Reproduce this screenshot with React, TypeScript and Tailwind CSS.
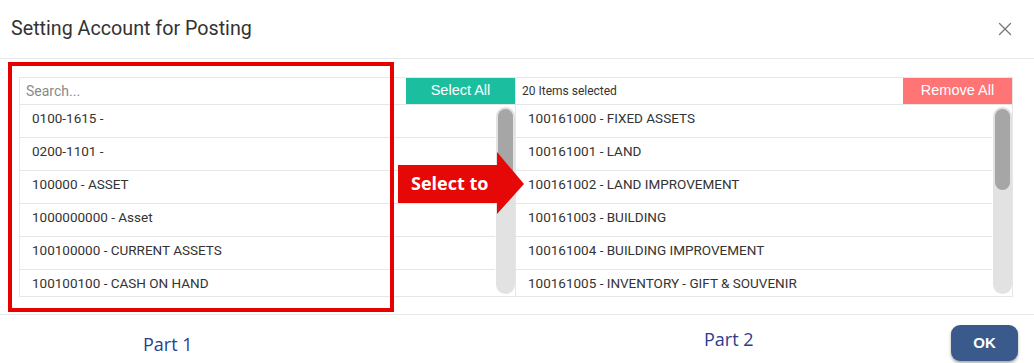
import React from 'react';
import { X } from 'lucide-react';

const leftItems = [
  '0100-1615 -',
  '0200-1101 -',
  '100000 - ASSET',
  '1000000000 - Asset',
  '100100000 - CURRENT ASSETS',
  '100100100 - CASH ON HAND',
];

const rightItems = [
  '100161000 - FIXED ASSETS',
  '100161001 - LAND',
  '100161002 - LAND IMPROVEMENT',
  '100161003 - BUILDING',
  '100161004 - BUILDING IMPROVEMENT',
  '100161005 - INVENTORY - GIFT & SOUVENIR',
];

const ItemList = ({ items }: { items: string[] }) => (
  <div className="flex h-[192px] overflow-hidden border-b border-[#e6e6e6]">
    <div className="flex-1 overflow-hidden">
      {items.map((it) => (
        <div
          key={it}
          className="h-[33px] shrink-0 border-b border-[#e6e6e6] pl-3 pt-[3px] text-[13.5px] leading-[20px] text-[#333] last:border-b-0"
        >
          {it}
        </div>
      ))}
    </div>
    <div className="w-[20px] shrink-0 py-[2px] pl-[1px]">
      <div className="h-full rounded-full bg-[#e2e2e2] p-[2px]">
        <div className="h-[81px] rounded-full bg-[#a6a6a6]" />
      </div>
    </div>
  </div>
);

const App = () => {
  return (
    <div className="relative w-[1034px] h-[363px] overflow-hidden bg-white font-['Roboto',sans-serif]">
      <div className="flex h-[59px] items-center justify-between border-b border-[#e9e9e9] pl-[11px] pr-[18px]">
        <h1 className="text-[19.7px] text-[#333]">Setting Account for Posting</h1>
        <X size={22} strokeWidth={1.4} className="text-[#777]" />
      </div>

      <div className="flex border-b border-[#e9e9e9] pl-[19px] pt-[18px] pb-[17px]">
        <div className="w-[496px] border-l border-t border-[#e6e6e6]">
          <div className="flex h-[27px] border-b border-[#e6e6e6]">
            <div className="flex-1 pl-[6px] pt-[3px] text-[14px] text-[#8a8a8a]">Search...</div>
            <button className="w-[109px] bg-[#1bbf9f] font-['Liberation_Sans',sans-serif] text-[14.5px] text-white">
              Select All
            </button>
          </div>
          <ItemList items={leftItems} />
        </div>
        <div className="w-[498px] border-x border-t border-[#e6e6e6]">
          <div className="flex h-[27px] items-center border-b border-[#e6e6e6]">
            <div className="flex-1 pl-[6px] text-[12px] text-[#333]">20 Items selected</div>
            <button className="h-full w-[109px] bg-[#ff7474] font-['Liberation_Sans',sans-serif] text-[14.5px] text-white">
              Remove All
            </button>
          </div>
          <ItemList items={rightItems} />
        </div>
      </div>

      <div className="flex justify-end pr-[16px] pt-[10px]">
        <button className="h-[36px] w-[67px] rounded-[9px] bg-[#3a5a8c] font-['Liberation_Sans',sans-serif] text-[15px] font-bold text-white shadow-[0_2px_3px_rgba(0,0,0,0.35)]">
          OK
        </button>
      </div>

      {/* annotations */}
      <div className="absolute left-[8px] top-[62px] h-[250px] w-[386px] border-[4px] border-[#e60000]" />
      <svg className="absolute left-[398px] top-[152px]" width="126" height="62" viewBox="0 0 126 62">
        <polygon points="0,13 99,13 99,0 126,32 99,62 99,51 0,51" fill="#e60707" />
      </svg>
      <div className="absolute left-[411px] top-[171px] font-['Open_Sans',sans-serif] text-[18px] font-bold leading-[24px] text-white">
        Select to
      </div>
      <div className="absolute left-[143px] top-[332px] font-['Open_Sans',sans-serif] text-[18px] leading-[24px] text-[#2b3d8f]">
        Part 1
      </div>
      <div className="absolute left-[704px] top-[327px] font-['Open_Sans',sans-serif] text-[18px] leading-[24px] text-[#2b3d8f]">
        Part 2
      </div>
    </div>
  );
};

export default App;
